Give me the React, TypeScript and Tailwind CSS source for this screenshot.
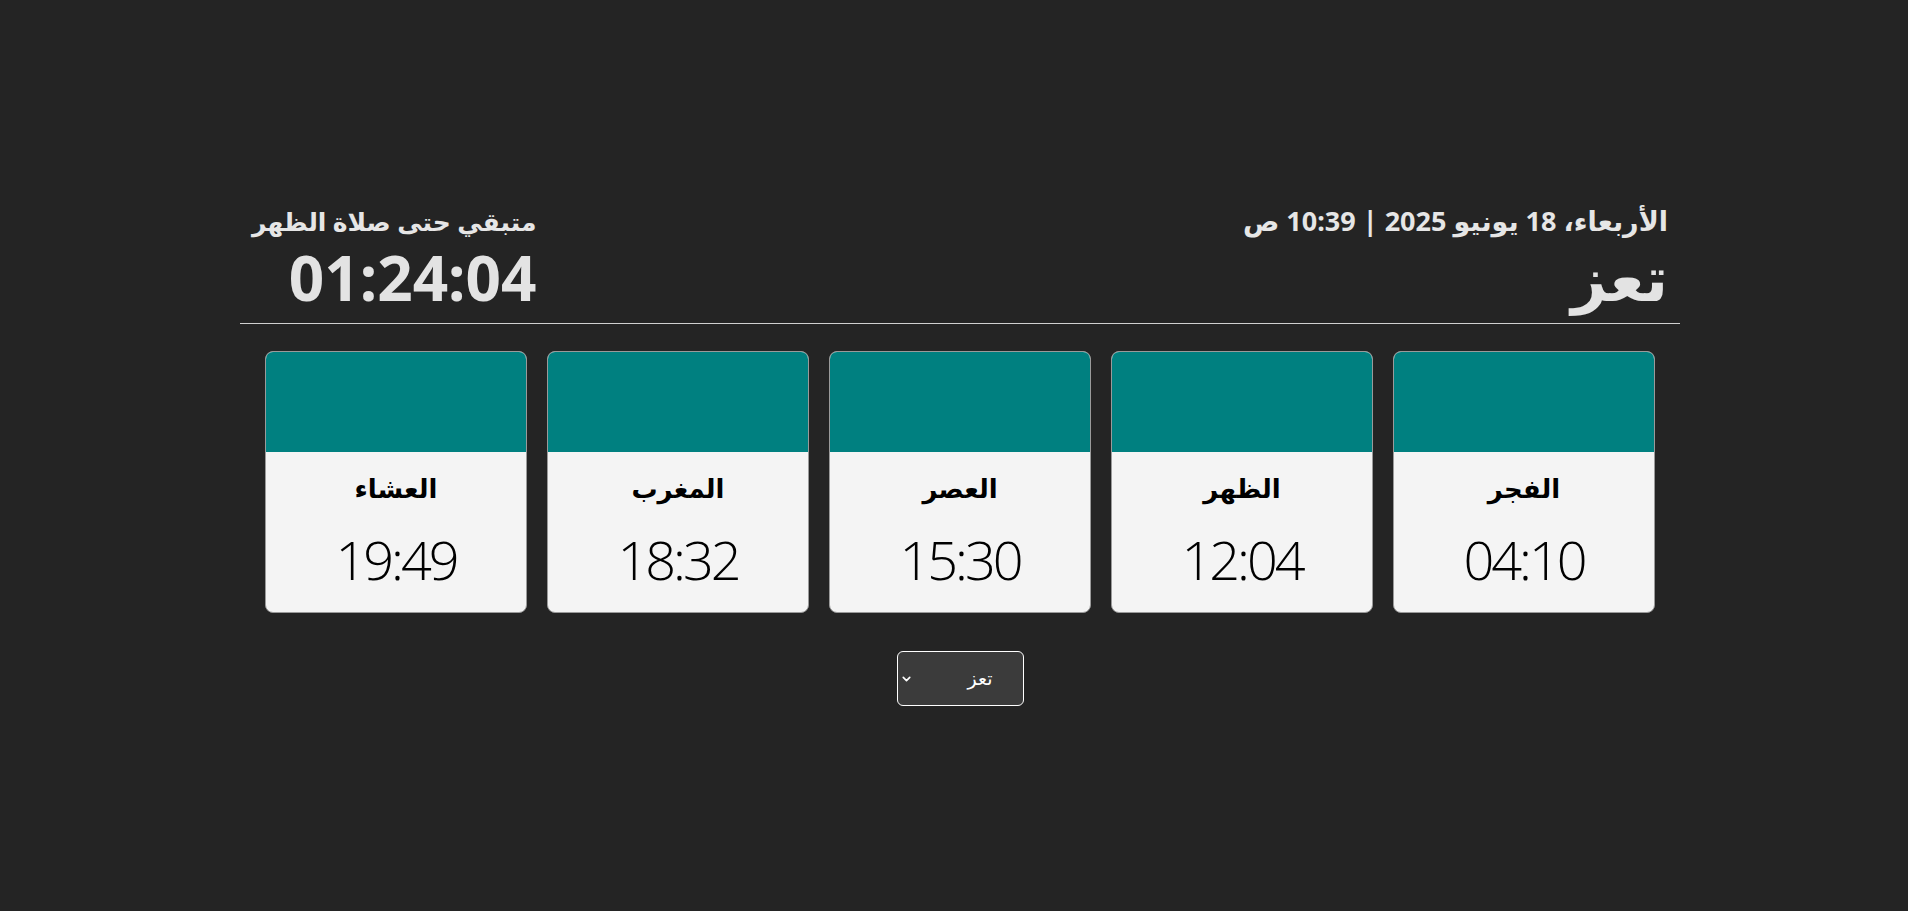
import React, { useState } from 'react';
import { ChevronDown } from 'lucide-react';

type Prayer = {
    name: string;
    time: string;
};

const prayers: Prayer[] = [
    { name: 'الفجر', time: '04:10' },
    { name: 'الظهر', time: '12:04' },
    { name: 'العصر', time: '15:30' },
    { name: 'المغرب', time: '18:32' },
    { name: 'العشاء', time: '19:49' },
];

const cities = ['تعز', 'صنعاء', 'عدن', 'الحديدة', 'إب'];

const PrayerCard = ({ name, time }: Prayer) => {
    return (
        <div className="w-[262px] h-[262px] flex flex-col rounded-lg overflow-hidden border border-[#9a9a9a] bg-[#f4f4f4]">
            <div className="h-[100px] bg-[#008080]"></div>
            <div className="flex-1 flex flex-col items-center">
                <div className="mt-[19px] text-[26px] leading-[34px] font-bold text-black">{name}</div>
                <div className="mt-[24px] text-[54px] leading-[60px] font-light tracking-[-3px] text-black" style={{ fontFamily: '"Open Sans", "Noto Sans", sans-serif' }}>{time}</div>
            </div>
        </div>
    );
};

export default function App() {
    const [city, setCity] = useState('تعز');

    return (
        <div
            dir="rtl"
            className="min-h-screen w-full bg-[#242424] flex items-center justify-center pl-3"
            style={{ fontFamily: '"Noto Sans", "DejaVu Sans", sans-serif' }}
        >
            <div className="w-[1440px] flex flex-col items-center">
                <div className="w-full flex justify-between items-start px-3 pb-[6px] border-b border-[#d0d0d0]">
                    <div className="flex flex-col items-start">
                        <div className="text-[27px] leading-[32px] font-bold text-[#e6e6e6]">الأربعاء، 18 يونيو 2025 | 10:39 ص</div>
                        <div className="text-[62px] leading-[80px] font-bold text-[#e3e3e3]">{city}</div>
                    </div>
                    <div className="flex flex-col items-start">
                        <div className="text-[25px] leading-[32px] font-semibold text-[#e6e6e6]">متبقي حتى صلاة الظهر</div>
                        <div dir="ltr" className="text-[62px] leading-[80px] font-bold text-[#e3e3e3]">01:24:04</div>
                    </div>
                </div>

                <div className="w-full flex justify-center gap-[20px] mt-[27px]">
                    {prayers.map((p) => (
                        <PrayerCard key={p.name} name={p.name} time={p.time} />
                    ))}
                </div>

                <div className="relative mt-[38px]">
                    <select
                        value={city}
                        onChange={(e) => setCity(e.target.value)}
                        className="appearance-none w-[127px] h-[55px] pr-[30px] pl-8 rounded-md border border-white bg-[#3b3b3b] text-white text-[19px] outline-none"
                    >
                        {cities.map((c) => (
                            <option key={c} value={c}>{c}</option>
                        ))}
                    </select>
                    <ChevronDown className="absolute left-[3px] top-1/2 -translate-y-1/2 w-[13px] h-[13px] text-white pointer-events-none" strokeWidth={3} />
                </div>
            </div>
        </div>
    );
}
